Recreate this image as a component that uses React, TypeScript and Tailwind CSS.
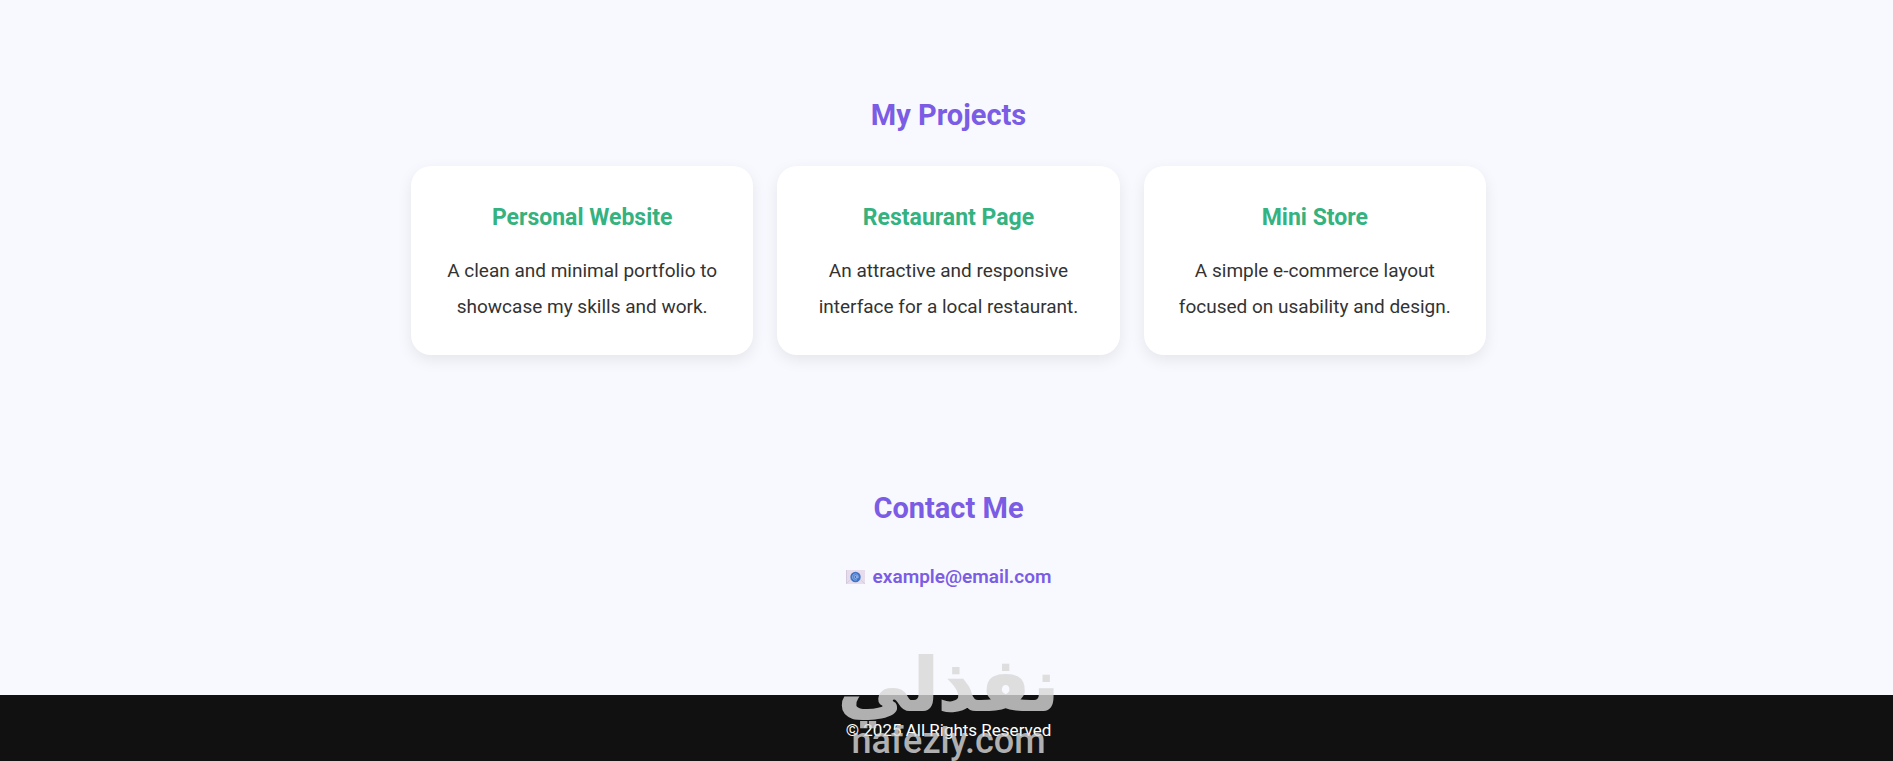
const projects = [
  {
    title: "Personal Website",
    lines: ["A clean and minimal portfolio to", "showcase my skills and work."],
  },
  {
    title: "Restaurant Page",
    lines: ["An attractive and responsive", "interface for a local restaurant."],
  },
  {
    title: "Mini Store",
    lines: ["A simple e-commerce layout", "focused on usability and design."],
  },
];

function MailIcon() {
  return (
    <svg width="19" height="14" viewBox="0 0 19 14" aria-hidden="true">
      <rect width="19" height="14" fill="#e6dcec" />
      <path d="M0 0h1v14H0z" fill="#d5c9dc" />
      <path d="M0 14l6-6M19 14l-6-6" stroke="#d9cbdf" strokeWidth="1" />
      <circle cx="9.5" cy="7" r="5.2" fill="#3f73c8" />
      <circle cx="9.5" cy="7" r="1.5" fill="none" stroke="#b9d0f2" strokeWidth="0.7" />
      <path
        d="M11.1 5.4v2q.2 1.1 1 .5c.7-1.9-.6-4-2.7-4A3.1 3.1 0 1 0 11 9.7"
        fill="none"
        stroke="#b9d0f2"
        strokeWidth="0.6"
      />
    </svg>
  );
}

function Watermark() {
  return (
    <div
      aria-hidden="true"
      className="pointer-events-none absolute inset-x-0 bottom-0 flex flex-col items-center pl-1 font-bold text-[#d8d8d8] opacity-80"
    >
      <span
        dir="rtl"
        lang="ar"
        className="font-['DejaVu_Sans',sans-serif] text-[72px] leading-[72px] [-webkit-text-stroke:2px_#d8d8d8]"
      >
        نفذلي
      </span>
      <span className="font-[Roboto,sans-serif] text-[36px] leading-[40px] font-medium">
        nafezly.com
      </span>
    </div>
  );
}

export default function App() {
  return (
    <div className="flex min-h-screen flex-col bg-[#f8f9fe] text-center font-[Roboto,'Liberation_Sans',sans-serif] text-[#333333]">
      <main className="flex-1">
        <section className="pt-[86px] pb-[62px] pl-1">
          <h2 className="mb-[22px] text-[29px] leading-[58px] font-bold text-[#7b5ce5]">
            My Projects
          </h2>
          <div className="mx-auto grid max-w-[1075px] gap-6 md:grid-cols-3">
            {projects.map((project) => (
              <article
                key={project.title}
                className="rounded-[20px] bg-white px-4 py-[30px] shadow-[0_5px_15px_rgba(0,0,0,0.08)]"
              >
                <h3 className="mb-[13px] text-[23px] leading-[44px] font-bold text-[#34b27f]">
                  {project.title}
                </h3>
                <p className="text-[19px] leading-[36px]">
                  {project.lines[0]}
                  <br />
                  {project.lines[1]}
                </p>
              </article>
            ))}
          </div>
        </section>
        <section className="pt-[62px] pb-[98px] pl-1">
          <h2 className="mb-[22px] text-[29px] leading-[58px] font-bold text-[#7b5ce5]">
            Contact Me
          </h2>
          <a
            href="mailto:example@email.com"
            className="inline-flex items-center gap-2 text-[19px] leading-[36px] font-semibold text-[#7b5ce5]"
          >
            <MailIcon />
            example@email.com
          </a>
        </section>
      </main>
      <footer className="relative bg-[#111111] pt-[19px] pb-[15px] pl-1 text-white">
        <p className="text-[17px] leading-[32px]">© 2025 All Rights Reserved</p>
        <Watermark />
      </footer>
    </div>
  );
}
